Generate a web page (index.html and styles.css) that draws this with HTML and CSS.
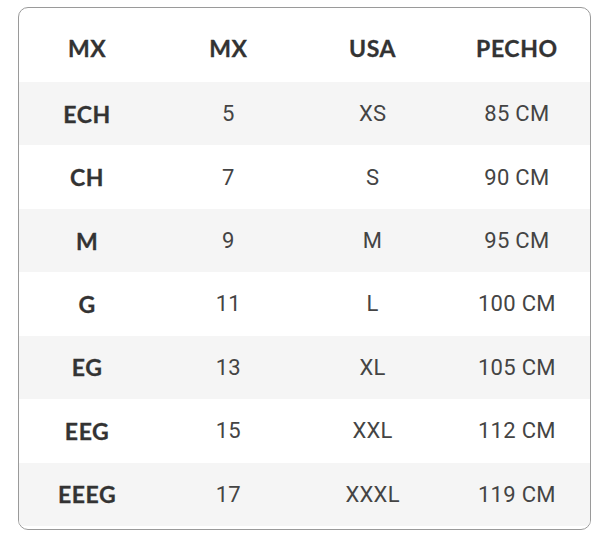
FILE: index.html
```html
<!DOCTYPE html>
<html lang="es">
<head>
<meta charset="utf-8">
<link rel="stylesheet" href="styles.css">
</head>
<body>
<div class="card">
  <div class="row head">
    <div class="cell">MX</div><div class="cell">MX</div><div class="cell">USA</div><div class="cell">PECHO</div>
  </div>
  <div class="row alt"><div class="cell b">ECH</div><div class="cell">5</div><div class="cell">XS</div><div class="cell">85 CM</div></div>
  <div class="row"><div class="cell b">CH</div><div class="cell">7</div><div class="cell">S</div><div class="cell">90 CM</div></div>
  <div class="row alt"><div class="cell b">M</div><div class="cell">9</div><div class="cell">M</div><div class="cell">95 CM</div></div>
  <div class="row"><div class="cell b">G</div><div class="cell">11</div><div class="cell">L</div><div class="cell">100 CM</div></div>
  <div class="row alt"><div class="cell b">EG</div><div class="cell">13</div><div class="cell">XL</div><div class="cell">105 CM</div></div>
  <div class="row"><div class="cell b">EEG</div><div class="cell">15</div><div class="cell">XXL</div><div class="cell">112 CM</div></div>
  <div class="row alt"><div class="cell b">EEEG</div><div class="cell">17</div><div class="cell">XXXL</div><div class="cell">119 CM</div></div>
</div>
</body>
</html>
```

FILE: styles.css
```css
html, body {
  margin: 0;
  padding: 0;
  background: #ffffff;
}
body {
  padding: 7px 0 0 18px;
}
.card {
  width: 571px;
  border: 1px solid #9a9a9a;
  border-radius: 10px;
  overflow: hidden;
  padding-bottom: 3px;
  background: #fff;
}
.row {
  display: grid;
  grid-template-columns: 136fr 146fr 142fr 146fr;
  height: 63.43px;
  align-items: center;
  font-family: Roboto, "Liberation Sans", sans-serif;
  font-size: 22px;
  letter-spacing: 0.3px;
  color: #444;
}
.row.alt {
  background: #f5f5f5;
}
.row.head {
  height: 74px;
  padding-top: 6px;
  box-sizing: border-box;
  font-family: Lato, "Open Sans", sans-serif;
  font-weight: 700;
  color: #333;
  font-size: 23px;
  letter-spacing: 0.6px;
  -webkit-text-stroke: 0.3px #333;
}
.cell {
  text-align: center;
}
.cell.b {
  font-family: Lato, "Open Sans", sans-serif;
  font-weight: 700;
  color: #333;
  font-size: 23px;
  letter-spacing: 0.6px;
  -webkit-text-stroke: 0.3px #333;
}
```
